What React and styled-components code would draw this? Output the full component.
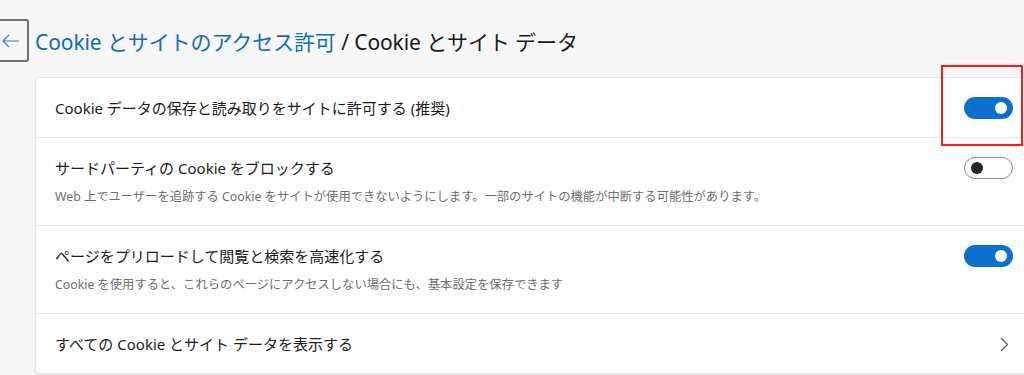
import React from 'react';
import styled, { createGlobalStyle } from 'styled-components';

const GlobalStyle = createGlobalStyle`
  html, body {
    margin: 0;
    padding: 0;
    background: #f7f7f7;
    overflow: hidden;
  }
  body {
    font-family: "Noto Sans", "Noto Sans CJK JP", sans-serif;
    color: #1b1b1b;
  }
`;

const Page = styled.div`
  width: 1024px;
  height: 375px;
  padding-top: 19px;
  box-sizing: border-box;
`;

const Header = styled.div`
  display: flex;
  align-items: center;
  height: 43px;
  margin-left: -3px;
`;

const BackButton = styled.button`
  width: 32px;
  height: 43px;
  box-sizing: border-box;
  border: 2px solid #727272;
  border-radius: 3px;
  background: transparent;
  padding: 0 0 0 3px;
  display: flex;
  align-items: center;
  justify-content: flex-start;
  margin-right: 6px;
`;

const Title = styled.h1`
  margin: 0;
  font-size: 21px;
  font-weight: 400;
  letter-spacing: -0.1px;
  color: #1b1b1b;
  white-space: nowrap;
`;

const Crumb = styled.span`
  color: #0f6cbd;
`;

const Card = styled.div`
  position: relative;
  margin: 15px -12px 0 35px;
  background: #fff;
  border: 1px solid #e6e6e6;
  border-radius: 4px;
  box-shadow: 0 1px 2px rgba(0, 0, 0, 0.08);
`;

const Row = styled.div`
  display: flex;
  align-items: flex-start;
  padding: 19px 22px ${p => (p.$desc ? '19px' : '18px')} 19px;
  border-top: ${p => (p.$first ? 'none' : '1px solid #ececec')};
`;

const RowText = styled.div`
  flex: 1;
`;

const RowTitle = styled.div`
  font-size: 15px;
  line-height: 22px;
  color: #1b1b1b;
`;

const RowDesc = styled.div`
  margin-top: 9px;
  font-size: 12.3px;
  line-height: 18px;
  color: #6e6e6e;
`;

const Toggle = styled.div`
  width: 49px;
  height: 22px;
  box-sizing: border-box;
  border-radius: 11px;
  display: flex;
  align-items: center;
  padding: 0 6px;
  justify-content: ${p => (p.$on ? 'flex-end' : 'flex-start')};
  background: ${p => (p.$on ? '#0c70cc' : '#fff')};
  border: ${p => (p.$on ? 'none' : '1px solid #8a8a8a')};
`;

const Knob = styled.span`
  width: 12px;
  height: 12px;
  border-radius: 50%;
  background: ${p => (p.$on ? '#fff' : '#262626')};
`;

const Chevron = styled.div`
  display: flex;
  align-items: center;
  height: 22px;
  margin-right: 4px;
`;

const Highlight = styled.div`
  position: absolute;
  left: 905px;
  top: -13px;
  width: 82px;
  height: 81px;
  box-sizing: border-box;
  border: 2px solid #ff1a1a;
  pointer-events: none;
`;

const rows = [
  { title: 'Cookie データの保存と読み取りをサイトに許可する (推奨)', toggle: true },
  {
    title: 'サードパーティの Cookie をブロックする',
    desc: 'Web 上でユーザーを追跡する Cookie をサイトが使用できないようにします。一部のサイトの機能が中断する可能性があります。',
    toggle: false,
  },
  {
    title: 'ページをプリロードして閲覧と検索を高速化する',
    desc: 'Cookie を使用すると、これらのページにアクセスしない場合にも、基本設定を保存できます',
    toggle: true,
  },
  { title: 'すべての Cookie とサイト データを表示する', link: true },
];

export default function App() {
  return (
    <Page>
      <GlobalStyle />
      <Header>
        <BackButton aria-label="戻る">
          <svg width="18" height="14" viewBox="0 0 18 14" fill="none">
            <path d="M7 1 L1 7 L7 13 M1 7 H17" stroke="#2b7fd4" strokeWidth="1.2" />
          </svg>
        </BackButton>
        <Title>
          <Crumb>Cookie とサイトのアクセス許可</Crumb> / Cookie とサイト データ
        </Title>
      </Header>
      <Card>
        <Highlight />
        {rows.map((r, i) => (
          <Row key={i} $first={i === 0} $desc={!!r.desc}>
            <RowText>
              <RowTitle>{r.title}</RowTitle>
              {r.desc && <RowDesc>{r.desc}</RowDesc>}
            </RowText>
            {r.link ? (
              <Chevron>
                <svg width="9" height="15" viewBox="0 0 9 15" fill="none">
                  <path d="M1 1 L7.5 7.5 L1 14" stroke="#5a5a5a" strokeWidth="1.3" />
                </svg>
              </Chevron>
            ) : (
              <Toggle $on={r.toggle}>
                <Knob $on={r.toggle} />
              </Toggle>
            )}
          </Row>
        ))}
      </Card>
    </Page>
  );
}
